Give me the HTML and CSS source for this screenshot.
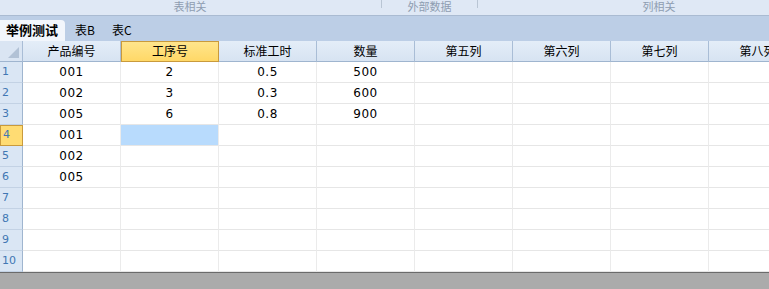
FILE: index.html
```html
<!DOCTYPE html>
<html lang="zh">
<head>
<meta charset="utf-8">
<link rel="stylesheet" href="styles.css">
</head>
<body>
<div class="app">
  <div class="ribbon">
    <div class="group g1"><span>表相关</span></div>
    <div class="sep"></div>
    <div class="group g2"><span>外部数据</span></div>
    <div class="sep"></div>
    <div class="group g3"><span>列相关</span></div>
  </div>
  <div class="tabs">
    <div class="tab active">举例测试</div>
    <div class="tab">表B</div>
    <div class="tab">表C</div>
  </div>
  <div class="grid">
    <div class="hd corner"><span class="tri"></span></div>
    <div class="hd">产品编号</div>
    <div class="hd sel">工序号</div>
    <div class="hd">标准工时</div>
    <div class="hd">数量</div>
    <div class="hd">第五列</div>
    <div class="hd">第六列</div>
    <div class="hd">第七列</div>
    <div class="hd">第八列</div>

    <div class="rh">1</div><div class="c">001</div><div class="c">2</div><div class="c">0.5</div><div class="c">500</div><div class="c"></div><div class="c"></div><div class="c"></div><div class="c"></div>
    <div class="rh">2</div><div class="c">002</div><div class="c">3</div><div class="c">0.3</div><div class="c">600</div><div class="c"></div><div class="c"></div><div class="c"></div><div class="c"></div>
    <div class="rh">3</div><div class="c">005</div><div class="c">6</div><div class="c">0.8</div><div class="c">900</div><div class="c"></div><div class="c"></div><div class="c"></div><div class="c"></div>
    <div class="rh sel">4</div><div class="c">001</div><div class="c cur"></div><div class="c"></div><div class="c"></div><div class="c"></div><div class="c"></div><div class="c"></div><div class="c"></div>
    <div class="rh">5</div><div class="c">002</div><div class="c"></div><div class="c"></div><div class="c"></div><div class="c"></div><div class="c"></div><div class="c"></div><div class="c"></div>
    <div class="rh">6</div><div class="c">005</div><div class="c"></div><div class="c"></div><div class="c"></div><div class="c"></div><div class="c"></div><div class="c"></div><div class="c"></div>
    <div class="rh">7</div><div class="c"></div><div class="c"></div><div class="c"></div><div class="c"></div><div class="c"></div><div class="c"></div><div class="c"></div><div class="c"></div>
    <div class="rh">8</div><div class="c"></div><div class="c"></div><div class="c"></div><div class="c"></div><div class="c"></div><div class="c"></div><div class="c"></div><div class="c"></div>
    <div class="rh">9</div><div class="c"></div><div class="c"></div><div class="c"></div><div class="c"></div><div class="c"></div><div class="c"></div><div class="c"></div><div class="c"></div>
    <div class="rh">10</div><div class="c"></div><div class="c"></div><div class="c"></div><div class="c"></div><div class="c"></div><div class="c"></div><div class="c"></div><div class="c"></div>
  </div>
  <div class="status"></div>
</div>
</body>
</html>
```

FILE: styles.css
```css
html, body {
  margin: 0;
  padding: 0;
  background: #ffffff;
}
.app {
  width: 769px;
  height: 289px;
  overflow: hidden;
  font-family: "Noto Sans CJK SC", "DejaVu Sans", sans-serif;
  font-size: 12px;
  color: #000;
  display: flex;
  flex-direction: column;
}
.ribbon {
  height: 15px;
  flex: none;
  display: flex;
  background: #dfe8f5;
  border-bottom: 1px solid #aabbd2;
}
.group {
  flex: none;
  height: 15px;
  display: flex;
  justify-content: center;
  align-items: flex-start;
  color: #8e9db1;
  font-size: 11px;
  line-height: 13px;
}
.g1 { width: 380px; }
.g2 { width: 93px; }
.g3 { width: 360px; }
.sep {
  flex: none;
  width: 1px;
  height: 8px;
  margin: 0 1px;
  background: #b9c5d4;
}
.tabs {
  height: 25px;
  flex: none;
  display: flex;
  align-items: flex-end;
  background: #bccee6;
}
.tab {
  height: 21px;
  line-height: 20px;
  font-size: 12px;
  color: #000;
  padding: 0 8px 0 9px;
}
.tab.active {
  background: #f2f6fc;
  font-weight: bold;
  font-size: 13px;
  padding: 0 6px 0 6px;
  width: 53px;
  border-top-right-radius: 4px;
}
.tab.active + .tab {
  padding-left: 10px;
}
.grid {
  flex: none;
  display: grid;
  grid-template-columns: 23px repeat(8, 98px);
  grid-auto-rows: 21px;
  height: 231px;
}
.hd {
  background: linear-gradient(#e4edf8, #d7e3f2);
  border-right: 1px solid #a9bdd6;
  border-bottom: 1px solid #9fb5cf;
  box-sizing: border-box;
  text-align: center;
  line-height: 20px;
  white-space: nowrap;
  overflow: hidden;
}
.hd.sel {
  background: linear-gradient(#ffe58c, #ffd867);
  border: 1px solid #c99a3c;
  line-height: 18px;
}
.corner {
  position: relative;
  background: #dae5f3;
}
.tri {
  position: absolute;
  right: 3px;
  bottom: 3px;
  width: 0;
  height: 0;
  border-left: 11px solid transparent;
  border-bottom: 11px solid #b2c2d6;
}
.rh {
  background: #dae6f4;
  border-right: 1px solid #9fb5cf;
  border-bottom: 1px solid #c3d2e4;
  box-sizing: border-box;
  color: #4177b3;
  padding-left: 2px;
  line-height: 20px;
  font-family: "DejaVu Sans", sans-serif;
  font-size: 11px;
}
.rh.sel {
  background: #ffdc73;
  border: 1px solid #c99a3c;
  line-height: 18px;
  padding-left: 2px;
}
.c {
  border-right: 1px solid #ebebeb;
  border-bottom: 1px solid #e6e6e6;
  box-sizing: border-box;
  text-align: center;
  line-height: 20px;
  font-size: 12px;
  font-family: "DejaVu Sans", "Noto Sans CJK SC", sans-serif;
  letter-spacing: 0.5px;
}
.c.cur {
  background: #b8dbfd;
}
.status {
  flex: 1;
  background: #ababab;
  border-top: 1px solid #6b6b6b;
}
```
